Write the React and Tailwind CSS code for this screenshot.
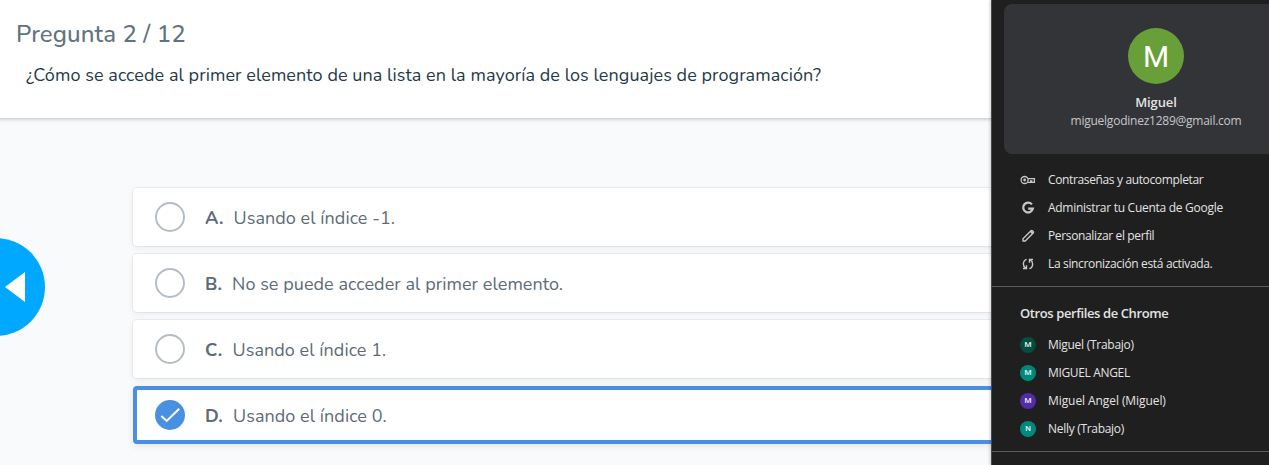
import React from "react";

const answers = [
  { letter: "A.", text: "Usando el índice -1.", letterClass: "w-[28.5px]" },
  { letter: "B.", text: "No se puede acceder al primer elemento.", letterClass: "w-[27px]" },
  { letter: "C.", text: "Usando el índice 1.", letterClass: "w-[27.5px]" },
  { letter: "D.", text: "Usando el índice 0.", letterClass: "w-[28px]", selected: true },
];

function Answer({ letter, text, letterClass, selected }) {
  return (
    <div
      className={
        selected
          ? "flex h-[58px] items-center rounded-[4px] border-4 border-[#4a90e2] bg-white pl-[18px] shadow-[0_2px_6px_rgba(38,50,56,0.1)]"
          : "flex h-[58px] items-center rounded-[4px] bg-white pl-[22px] shadow-[0_0_0_1px_rgba(38,70,76,0.06),0_2px_6px_rgba(38,50,56,0.07)]"
      }
    >
      {selected ? (
        <span className="flex size-[30px] shrink-0 rounded-full bg-[#4a90e2]">
          <svg viewBox="0 0 30 30" className="size-[30px]" fill="none" stroke="white" strokeWidth="2">
            <path d="M6.3 16.1 11.7 21 24.2 8.8" />
          </svg>
        </span>
      ) : (
        <span className="size-[30px] shrink-0 rounded-full border-2 border-[#b5bdc4]" />
      )}
      <span className={"ml-5 shrink-0 pt-[2px] text-[18px] leading-6 font-bold tracking-[0.3px] " + letterClass}>{letter}</span>
      <span className="pt-[2px] text-[18px] leading-6 tracking-[0.06px] whitespace-nowrap">{text}</span>
    </div>
  );
}

function KeyIcon() {
  return (
    <svg viewBox="0 0 16 16" className="size-4" fill="none" stroke="#c7c7c7" strokeWidth="1.3">
      <circle cx="4.6" cy="8" r="3.5" />
      <circle cx="4.6" cy="8" r="1.4" fill="#c7c7c7" stroke="none" />
      <path d="M8 6.6h6.4v3.8h-2.6V8.8h-1.2v1.6H7.8" />
    </svg>
  );
}

function GoogleIcon() {
  return (
    <svg viewBox="0 0 16 16" className="size-4" fill="none" stroke="#c7c7c7" strokeWidth="2.2">
      <path d="M11.9 4.4A4.9 4.9 0 1 0 12.9 8.6H8.2" />
    </svg>
  );
}

function PencilIcon() {
  return (
    <svg viewBox="0 0 16 16" className="size-4" fill="none" stroke="#c7c7c7" strokeWidth="1.4" strokeLinejoin="round">
      <path d="M3 13v-2.3L11 2.8q.7-.7 1.4 0l.8.8q.7.7 0 1.4L5.3 13z" />
      <path d="m9.8 3.8 2.4 2.4 1.4-1.4-2.4-2.4z" fill="#c7c7c7" stroke="none" />
    </svg>
  );
}

function SyncIcon() {
  return (
    <svg viewBox="0 0 16 16" className="size-4" fill="none" stroke="#c7c7c7" strokeWidth="1.4">
      <path d="M6.6 3.3C4.2 4 3.4 5.8 3.4 8c0 1.800.8 3.200 2.300 4M3 12.500h3.500V9.300" />
      <path d="M9.400 12.700C11.800 12 12.600 10.200 12.600 8c0-1.800-.8-3.200-2.300-4M13 3.500H9.500v3.200" />
    </svg>
  );
}

const actions = [
  { icon: <KeyIcon />, text: "Contraseñas y autocompletar", cls: "tracking-[-0.36px]" },
  { icon: <GoogleIcon />, text: "Administrar tu Cuenta de Google", cls: "tracking-[-0.28px]" },
  { icon: <PencilIcon />, text: "Personalizar el perfil", cls: "tracking-[-0.36px]" },
  { icon: <SyncIcon />, text: "La sincronización está activada.", cls: "tracking-[-0.34px]" },
];

const profiles = [
  { initial: "M", text: "Miguel (Trabajo)", color: "bg-[#044d40]", cls: "tracking-[-0.27px]" },
  { initial: "M", text: "MIGUEL ANGEL", color: "bg-[#00897b]", cls: "tracking-[-0.34px]" },
  { initial: "M", text: "Miguel Angel (Miguel)", color: "bg-[#512da8]", cls: "tracking-[-0.08px]" },
  { initial: "N", text: "Nelly (Trabajo)", color: "bg-[#00897b]", cls: "tracking-[-0.3px]" },
];

function ProfileMenu() {
  return (
    <aside className="relative flex h-[465px] w-[278px] shrink-0 flex-col overflow-hidden border-l border-[#4a4a4a] bg-[#1f1f1f] font-['Segoe_UI','Open_Sans',sans-serif] text-[12px] text-[#e3e3e3] shadow-[-1px_0_3px_rgba(0,0,0,0.2)]">
      <div className="mt-1 ml-3 flex h-[150px] w-[304px] shrink-0 flex-col items-center rounded-lg bg-[#333438] pt-6">
        <div className="flex size-14 items-center justify-center rounded-full bg-[#689f38] font-['Roboto',sans-serif] text-[30px] text-white">M</div>
        <div className="mt-[9px] text-[13px] leading-[18px] font-semibold tracking-[-0.1px]">Miguel</div>
        <div className="mt-px text-[12px] leading-[18px] tracking-[-0.24px] text-[#c7c7c7]">miguelgodinez1289@gmail.com</div>
      </div>
      <ul className="mt-3 flex shrink-0 flex-col">
        {actions.map((a) => (
          <li key={a.text} className="flex h-7 items-center gap-3 pl-7">
            {a.icon}
            <span className={"whitespace-nowrap " + a.cls}>{a.text}</span>
          </li>
        ))}
      </ul>
      <div className="mt-2 h-px shrink-0 bg-[#5c5c5c]" />
      <h2 className="mt-4 ml-7 text-[13px] leading-5 font-semibold tracking-[-0.4px] whitespace-nowrap">Otros perfiles de Chrome</h2>
      <ul className="mt-2 flex shrink-0 flex-col">
        {profiles.map((p) => (
          <li key={p.text} className="flex h-7 items-center gap-3 pl-7">
            <span className={"flex size-4 items-center justify-center rounded-full font-['Roboto',sans-serif] text-[8px] font-medium text-white/90 " + p.color}>{p.initial}</span>
            <span className={"whitespace-nowrap " + p.cls}>{p.text}</span>
          </li>
        ))}
      </ul>
      <div className="mt-2 h-px shrink-0 bg-[#5c5c5c]" />
    </aside>
  );
}

export default function App() {
  return (
    <div className="flex h-[465px] w-[1269px] overflow-hidden bg-[#f9fafc] font-[Nunito,Lato,sans-serif] text-[#5c6b77]">
      <main className="-mr-[60px] flex w-[1051px] shrink-0 flex-col">
        <header className="h-[118px] shrink-0 bg-white shadow-[0_-1px_4px_2px_rgba(38,60,66,0.3)]">
          <h1 className="pt-[18px] pl-4 text-[24px] leading-8 font-medium tracking-[0.1px] text-[#607382]">Pregunta 2 / 12</h1>
          <p className="mt-[13px] pl-[26px] text-[18px] leading-6 tracking-[0.07px] whitespace-nowrap text-[#1f3a48]">
            ¿Cómo se accede al primer elemento de una lista en la mayoría de los lenguajes de programación?
          </p>
        </header>
        <div className="flex flex-1">
          <div className="flex w-[133px] shrink-0 overflow-hidden pt-[120px]">
            <button aria-label="Anterior" className="-ml-[53px] flex size-[98px] shrink-0 items-center justify-end rounded-full bg-[#00a8ff] pr-5">
              <svg viewBox="0 0 20 30" className="h-[30px] w-5" fill="white">
                <path d="M20 0v30L0 15z" />
              </svg>
            </button>
          </div>
          <div className="flex flex-1 flex-col gap-2 pt-[70px]">
            {answers.map((a) => (
              <Answer key={a.letter} {...a} />
            ))}
          </div>
        </div>
      </main>
      <ProfileMenu />
    </div>
  );
}
